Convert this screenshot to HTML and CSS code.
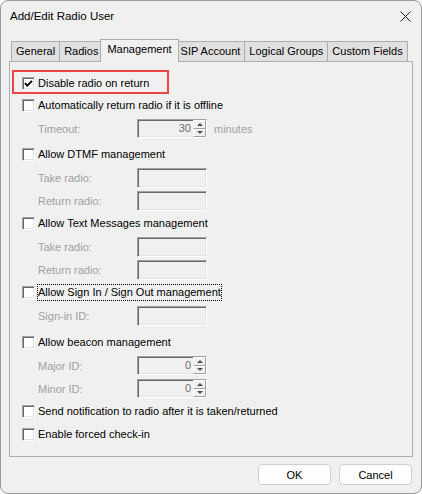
FILE: index.html
```html
<!DOCTYPE html>
<html lang="en">
<head>
    <meta charset="UTF-8">
    <title>Add/Edit Radio User</title>
    <link rel="stylesheet" href="styles.css">
</head>
<body>
    <div class="window">
        <div class="titlebar">
            <span class="title">Add/Edit Radio User</span>
            <svg class="close" width="11" height="11" viewBox="0 0 11 11">
                <path d="M0.5 0.5L10.5 10.5M10.5 0.5L0.5 10.5" stroke="#1a1a1a" stroke-width="1" fill="none"/>
            </svg>
        </div>

        <!-- Tab strip -->
        <div class="tabs">
            <div class="tab">General</div>
            <div class="tab">Radios</div>
            <div class="tab active">Management</div>
            <div class="tab">SIP Account</div>
            <div class="tab">Logical Groups</div>
            <div class="tab">Custom Fields</div>
        </div>

        <div class="panel">
            <div class="highlight">
                <span class="checkbox">
                    <svg width="11" height="11" viewBox="0 0 11 11">
                        <path d="M2 5.2L4.3 7.6L9 2.8" stroke="#000" stroke-width="1.8" fill="none"/>
                    </svg>
                </span>
                <span class="label">Disable radio on return</span>
            </div>

            <div class="group lead">
                <div class="opt"><span class="checkbox"></span><span class="label">Automatically return radio if it is offline</span></div>
                <div class="sub">
                    <span class="sub-label">Timeout:</span>
                    <span class="spin"><span class="value">30</span><span class="arrows"><span class="arrow up"></span><span class="arrow down"></span></span></span>
                    <span class="unit">minutes</span>
                </div>
            </div>

            <div class="group spaced">
                <div class="opt"><span class="checkbox"></span><span class="label">Allow DTMF management</span></div>
                <div class="sub"><span class="sub-label">Take radio:</span><span class="field"></span></div>
                <div class="sub"><span class="sub-label">Return radio:</span><span class="field"></span></div>
            </div>

            <div class="group">
                <div class="opt"><span class="checkbox"></span><span class="label">Allow Text Messages management</span></div>
                <div class="sub"><span class="sub-label">Take radio:</span><span class="field"></span></div>
                <div class="sub"><span class="sub-label">Return radio:</span><span class="field"></span></div>
            </div>

            <div class="group">
                <div class="opt"><span class="checkbox"></span><span class="label focus">Allow Sign In / Sign Out management</span></div>
                <div class="sub"><span class="sub-label">Sign-in ID:</span><span class="field"></span></div>
            </div>

            <div class="group wide">
                <div class="opt"><span class="checkbox"></span><span class="label">Allow beacon management</span></div>
                <div class="sub">
                    <span class="sub-label">Major ID:</span>
                    <span class="spin"><span class="value">0</span><span class="arrows"><span class="arrow up"></span><span class="arrow down"></span></span></span>
                </div>
                <div class="sub">
                    <span class="sub-label">Minor ID:</span>
                    <span class="spin"><span class="value">0</span><span class="arrows"><span class="arrow up"></span><span class="arrow down"></span></span></span>
                </div>
            </div>

            <div class="group">
                <div class="opt"><span class="checkbox"></span><span class="label">Send notification to radio after it is taken/returned</span></div>
            </div>

            <div class="group">
                <div class="opt"><span class="checkbox"></span><span class="label">Enable forced check-in</span></div>
            </div>
        </div>

        <div class="buttons">
            <button class="button">OK</button>
            <button class="button">Cancel</button>
        </div>
    </div>
</body>
</html>
```

FILE: styles.css
```css
body {
    margin: 0;
    background: #ffffff;
    font-family: "Liberation Sans", Arial, sans-serif;
    font-size: 11px;
    color: #000;
}

.window {
    width: 422px;
    height: 494px;
    box-sizing: border-box;
    border: 1px solid #9a9a9a;
    border-radius: 8px;
    background: #f0f0f0;
    display: flex;
    flex-direction: column;
    overflow: hidden;
}

.titlebar {
    height: 38px;
    box-sizing: border-box;
    display: flex;
    justify-content: space-between;
    align-items: flex-start;
    padding: 8px 10px 0 9px;
}

.title {
    font-size: 11.5px;
    line-height: 14px;
}

.close {
    display: block;
    margin-top: 2px;
}

/* tab strip */
.tabs {
    display: flex;
    align-items: flex-end;
    height: 22px;
    padding-left: 10px;
}

.tab {
    height: 20px;
    box-sizing: border-box;
    line-height: 19px;
    padding: 0 4px;
    border: 1px solid #adadad;
    border-bottom: none;
    background: #e0e0e0;
    margin-left: -1px;
    white-space: nowrap;
}

.tab:first-child {
    margin-left: 0;
}

.tab.active {
    position: relative;
    z-index: 1;
    height: 23px;
    margin: 0 -2px -1px -3px;
    padding: 0 6px 3px;
    line-height: 18px;
    background: #f0f0f0;
}

.panel {
    height: 396px;
    box-sizing: border-box;
    margin: 0 8px;
    padding-top: 8px;
    border: 1px solid #adadad;
    background: #f0f0f0;
}

.highlight {
    width: 157px;
    height: 24px;
    box-sizing: border-box;
    margin-left: 2px;
    padding: 2px 0 0 8px;
    border: 2px solid #ee4444;
    display: flex;
    align-items: center;
}

.group {
    margin-top: 1px;
}

.group.lead {
    margin-top: 0;
}

.group.spaced {
    margin-top: 4px;
}

.group.wide {
    margin-top: 5px;
}

.opt {
    height: 22px;
    display: flex;
    align-items: center;
    padding-left: 12px;
}

.checkbox {
    width: 13px;
    height: 13px;
    box-sizing: border-box;
    flex-shrink: 0;
    background: #ffffff;
    border: 1px solid;
    border-color: #a0a0a0 #ffffff #ffffff #a0a0a0;
    box-shadow: inset 1px 1px #696969, inset -1px -1px #e3e3e3;
}

.checkbox svg {
    display: block;
}

.label {
    margin-left: 3px;
    white-space: nowrap;
}

.label.focus {
    outline: 1px dotted #000;
    padding: 1px 0;
    line-height: 13px;
}

.sub {
    height: 21px;
    margin-top: 2px;
    display: flex;
    align-items: center;
    padding-left: 28px;
    color: #a0a0a0;
}

.sub-label {
    width: 99px;
}

.field,
.spin {
    width: 70px;
    box-sizing: border-box;
    background: #f0f0f0;
    border: 1px solid;
    border-color: #a0a0a0 #ffffff #ffffff #a0a0a0;
    box-shadow: inset 1px 1px #696969, inset -1px -1px #e3e3e3;
}

.field {
    height: 20px;
}

.spin {
    height: 19px;
    display: flex;
}

.spin .value {
    flex: 1;
    text-align: right;
    padding-right: 2px;
    line-height: 17px;
    color: #6d6d6d;
}

.arrows {
    width: 13px;
    display: flex;
    flex-direction: column;
}

.arrow {
    flex: 1;
    box-sizing: border-box;
    border: 1px solid;
    border-color: #ffffff #a0a0a0 #a0a0a0 #ffffff;
    background: #f0f0f0;
    display: flex;
    align-items: center;
    justify-content: center;
}

.arrow::after {
    content: "";
    border-left: 3px solid transparent;
    border-right: 3px solid transparent;
}

.arrow.up::after {
    border-bottom: 3px solid #505050;
}

.arrow.down::after {
    border-top: 3px solid #505050;
}

.unit {
    margin-left: 7px;
}

.buttons {
    display: flex;
    justify-content: flex-end;
    gap: 8px;
    padding: 7px 9px 0 0;
}

.button {
    width: 73px;
    height: 21px;
    padding: 0;
    font-family: inherit;
    font-size: 11px;
    color: #000;
    background: #fdfdfd;
    border: 1px solid #d0d0d0;
    border-radius: 4px;
}
```
